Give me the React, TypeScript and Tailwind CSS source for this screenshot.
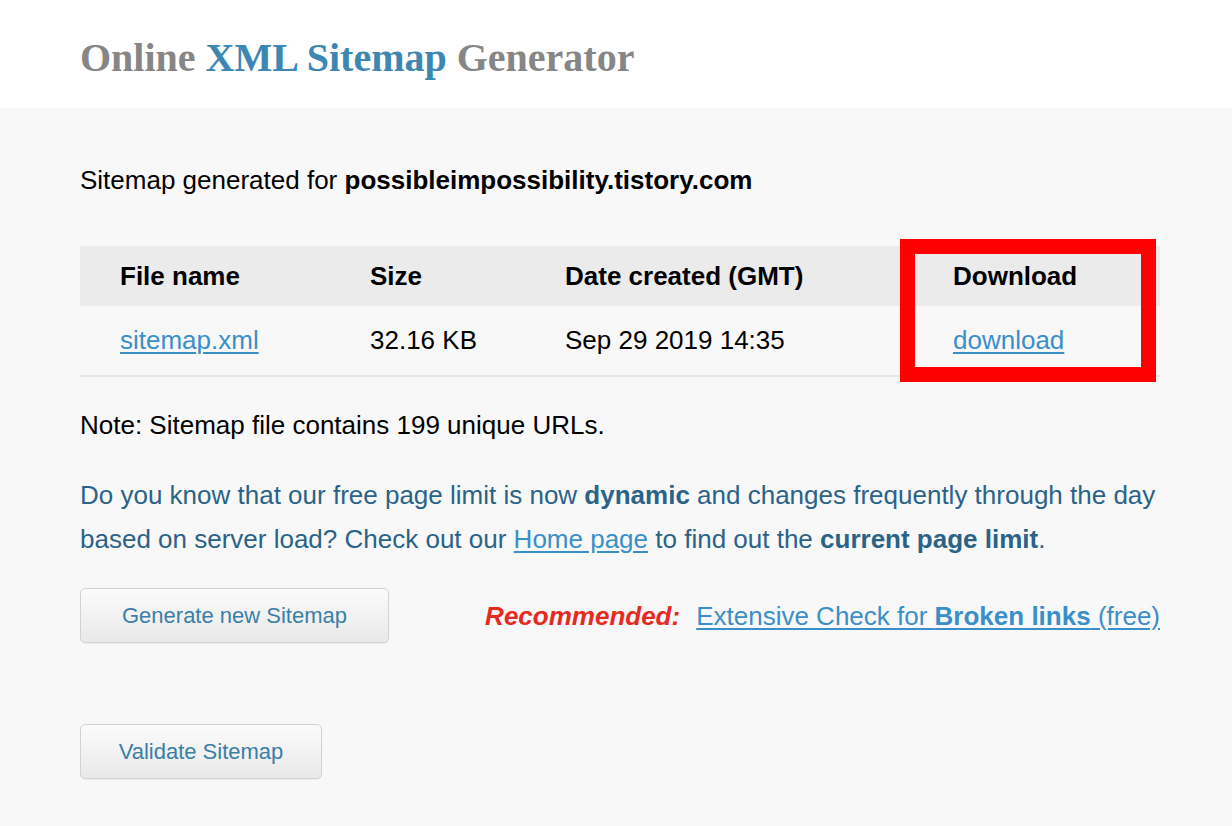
import React from "react";

const columns = [
  { label: "File name", width: "w-[250px]" },
  { label: "Size", width: "w-[195px]" },
  { label: "Date created (GMT)", width: "w-[388px]" },
  { label: "Download", width: "w-[247px]" },
];

function SitemapButton({ label, width }: { label: string; width: string }) {
  return (
    <button
      className={`${width} h-[55px] rounded-[5px] border border-[#d2d2d2] bg-gradient-to-b from-[#fbfbfb] to-[#e9e9e9] text-[22px] text-[#3a7fa8] shadow-[0_1px_1px_rgba(0,0,0,0.05)]`}
    >
      {label}
    </button>
  );
}

export default function App() {
  return (
    <div className="min-h-screen bg-[#f8f8f8] font-['Liberation_Sans',Arial,sans-serif] text-black">
      <header className="h-[108px] bg-white px-[80px] pt-[34px]">
        <h1 className="font-['Liberation_Serif','Times_New_Roman',serif] text-[40px] font-bold leading-[48px] text-[#868686]">
          Online <span className="text-[#3d88b3]">XML Sitemap</span> Generator
        </h1>
      </header>

      <main className="px-[80px] pt-[57px] pb-[60px]">
        <p className="text-[26px] leading-[30px]">
          Sitemap generated for <b>possibleimpossibility.tistory.com</b>
        </p>

        <div className="relative mt-[51px] w-[1080px]">
          <table className="w-full table-fixed border-collapse text-[26px]">
            <thead>
              <tr className="h-[60px] bg-[#ebebeb]">
                {columns.map((col) => (
                  <th key={col.label} className={`${col.width} pl-[40px] text-left font-bold`}>
                    {col.label}
                  </th>
                ))}
              </tr>
            </thead>
            <tbody>
              <tr className="h-[70px] border-b-2 border-[#e6e6e6]">
                <td className="pl-[40px]">
                  <a href="#" className="text-[#3b8fc9] underline underline-offset-[3px]">
                    sitemap.xml
                  </a>
                </td>
                <td className="pl-[40px]">32.16 KB</td>
                <td className="pl-[40px]">Sep 29 2019 14:35</td>
                <td className="pl-[40px]">
                  <a href="#" className="text-[#3b8fc9] underline underline-offset-[3px]">
                    download
                  </a>
                </td>
              </tr>
            </tbody>
          </table>
          {/* highlight box drawn over the download column */}
          <div className="pointer-events-none absolute left-[820px] top-[-7px] h-[143px] w-[256px] border-[15px] border-[#ff0000]" />
        </div>

        <p className="mt-[33px] text-[26px] leading-[30px]">
          Note: Sitemap file contains 199 unique URLs.
        </p>

        <p className="mt-[33px] w-[1090px] text-[26px] leading-[44px] text-[#2b6388]">
          Do you know that our free page limit is now <b>dynamic</b> and changes frequently through the day
          based on server load? Check out our{" "}
          <a href="#" className="text-[#3b8fc9] underline underline-offset-[3px]">
            Home page
          </a>{" "}
          to find out the <b>current page limit</b>.
        </p>

        <div className="mt-[27px] flex w-[1080px] items-center justify-between">
          <SitemapButton label="Generate new Sitemap" width="w-[309px]" />
          <p className="text-[26px] leading-[30px]">
            <b className="italic text-[#e8291f]">Recommended:</b>
            <a href="#" className="ml-[16px] text-[#3b8fc9] underline underline-offset-[3px]">
              Extensive Check for <b>Broken links</b> (free)
            </a>
          </p>
        </div>

        <div className="mt-[81px]">
          <SitemapButton label="Validate Sitemap" width="w-[242px]" />
        </div>
      </main>
    </div>
  );
}
